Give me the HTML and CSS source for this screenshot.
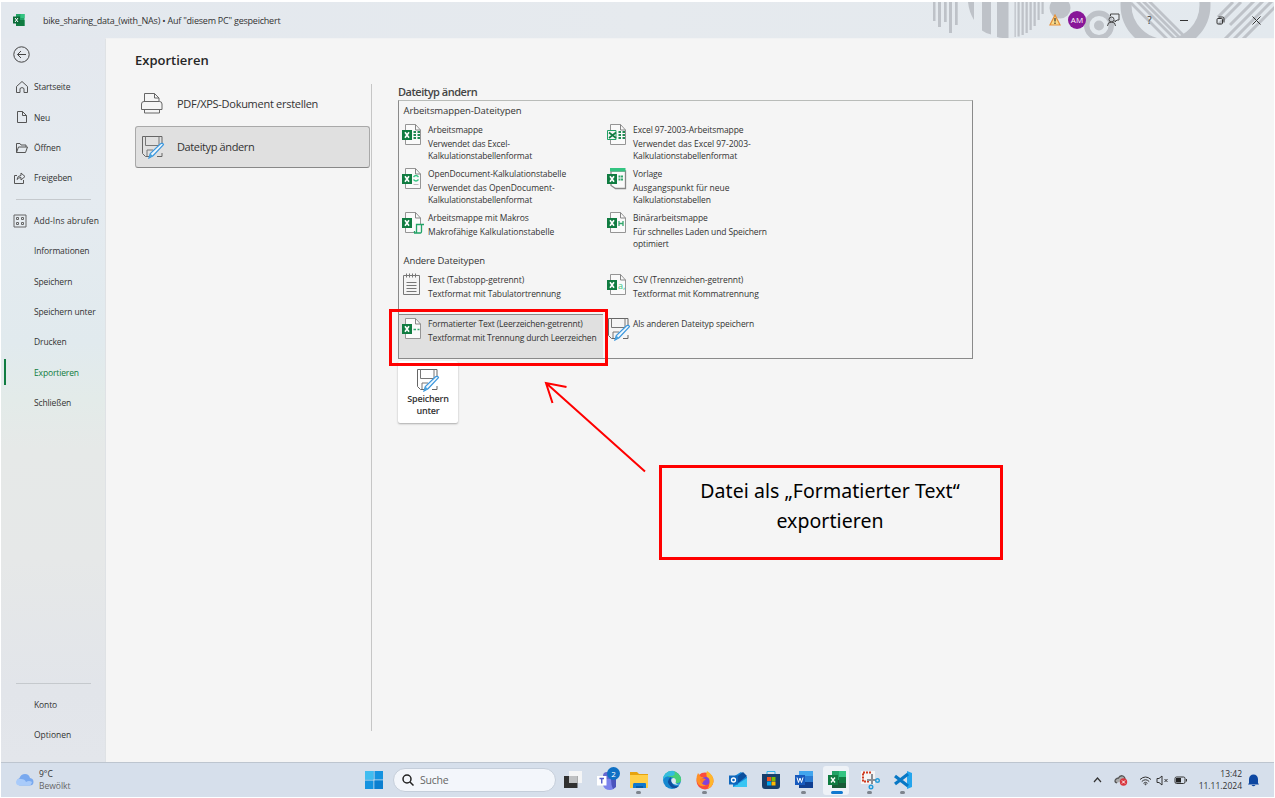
FILE: index.html
```html
<!DOCTYPE html>
<html lang="de">
<head>
<meta charset="utf-8">
<title>Exportieren</title>
<link rel="stylesheet" href="styles.css">
</head>
<body>
<svg class="defs" width="0" height="0">
  <defs>
    <symbol id="page" viewBox="0 0 24 24"><path d="M3.500 1.500h10l5 5.500v14.500h-15z" fill="#fafafa" stroke="#959595"/><path d="M13.500 1.500v5.500h5" fill="none" stroke="#858585"/></symbol>
    <symbol id="xl" viewBox="0 0 24 24"><path d="M0 7h10v10H0z" fill="#107c41"/><path d="M3 9.200l4 5.600M7 9.200l-4 5.600" stroke="#fff" stroke-width="1.600" fill="none"/></symbol>
    <symbol id="disk" viewBox="0 0 24 24"><path d="M1.500 1.500h19.500v8M21 18v3.500h-5M10 21.500H4.500l-3-3v-17" fill="none" stroke="#666"/><path d="M4.500 1.500v9h13.500v-9M6 21v-6h6" fill="none" stroke="#777"/><path d="M8 23l1.300-4.500L19.500 8.700q2.200-1.200 3 1l-10.200 10.800z" fill="#eef7fd" stroke="#3a96dd" stroke-width="1.200"/><path d="M8 23l1.300-4.500 3 2.700z" fill="#4ba3dd"/></symbol>
  </defs>
</svg>
<div class="screen">
  <header class="titlebar">
    <svg class="deco" width="345" height="36" viewBox="929 2 345 36">
      <g fill="#bec2c8">
        <path d="M933 2h2.500v19H933zM938 2h3v25h-3zM944 2h2.700v20H944zM949 2h3v31h-3zM955 2h2.700v23H955zM968 2h6v18Q969 12 968 2zM982 2h9v32.500q-5-1-9-4zM997 2h11.500v36q-6 .500-11.500-1z"/>
        <path d="M1014.500 2h1.300v35h-1.300zM1017.500 2h2.200v34.500h-2.200zM1021.500 2h2.300v33h-2.300zM1025.500 2h2.300v31h-2.300zM1029.500 2h2.300v28h-2.300zM1033.500 2h2.300v24h-2.300zM1037.500 2h2.200v18h-2.200zM1041.500 2h2.200v12h-2.200z"/>
        <circle cx="1060" cy="8" r="10.500"/><circle cx="1099" cy="25.500" r="5"/>
      </g>
      <g fill="none" stroke="#bec2c8">
        <circle cx="1099" cy="25.500" r="12.300" stroke-width="5.400"/>
        <circle cx="1165.500" cy="5" r="39.500" stroke-width="11"/>
        <path d="M1131 3l37 37M1132-4l44 44M1138-4l44 44M1144-4l44 44" stroke-width="2.800"/>
        <path d="M1218 17l15-15M1219 24l22-22M1230 25l25-25M1218 46l48-48M1227 46l48-48M1236 46l48-48" stroke-width="3"/>
      </g>
    </svg>
    <svg class="app-logo" width="12" height="12" viewBox="0 0 12 12"><path d="M3 0h8.500v12H3z" fill="#21a366"/><path d="M3 6h8.500v6H3z" fill="#107c41"/><path d="M7.500 0h4v4h-4z" fill="#33c481"/><path d="M0 2.500h7v7H0z" fill="#0b6b38"/><path d="M2 4l3 4M5 4L2 8" stroke="#fff"/></svg>
    <span class="doc-name">bike_sharing_data_(with_NAs) • Auf "diesem PC" gespeichert</span>
    <div class="controls">
      <svg class="warn" width="12" height="12" viewBox="0 0 12 12"><path d="M6 1l5 10H1z" fill="#f9dc8c" stroke="#e5913a" stroke-width="1.200"/><path d="M6 4v3.500M6 8.500V10" stroke="#3c3325" stroke-width="1.200"/></svg>
      <span class="avatar">AM</span>
      <svg class="feedback" width="14" height="14" viewBox="0 0 14 14" fill="none" stroke="#444"><circle cx="5.500" cy="6.500" r="2.500"/><path d="M1.500 13q0-4 4-4t4 4M4.500 3V1H13v6h-2l-2 2V7"/></svg>
      <span class="cell help">?</span>
      <span class="cell"><svg width="9" height="9"><path d="M0 4.500h8" stroke="#333"/></svg></span>
      <span class="cell"><svg width="9" height="9" fill="none" stroke="#333"><rect x="1" y="2.500" width="5.500" height="5.500" rx="1"/><path d="M2.500 1h4q1.500 0 1.500 1.500v4"/></svg></span>
      <span class="cell"><svg width="9" height="9"><path d="M.500.500l8 8M8.500.500l-8 8" stroke="#333"/></svg></span>
    </div>
  </header>

  <div class="backstage">
    <nav class="side">
      <svg class="back" width="17" height="17" viewBox="0 0 17 17" fill="none" stroke="#444"><circle cx="8.500" cy="8.500" r="7.700"/><path d="M13 8.500H4.500M8 5L4.500 8.500 8 12"/></svg>
      <a class="nav"><svg width="14" height="14" viewBox="0 0 14 14" fill="none" stroke="#555"><path d="M1.500 6.500L7 1.500l5.500 5v6H9v-4q-2-2-4 0v4H1.500z"/></svg><span>Startseite</span></a>
      <a class="nav"><svg width="14" height="14" viewBox="0 0 14 14" fill="none" stroke="#555"><path d="M2.500 1.500h5l4 4v7h-9zM7.500 1.500v4h4"/></svg><span>Neu</span></a>
      <a class="nav"><svg width="14" height="14" viewBox="0 0 14 14" fill="none" stroke="#555"><path d="M1.500 11.500v-9H5l1 1.500h5v2M1.500 11.500l2-5.500h9l-2 5.500z"/></svg><span>Öffnen</span></a>
      <a class="nav share"><svg width="14" height="14" viewBox="0 0 14 14" fill="none" stroke="#555"><path d="M4 4.500H1.500v8h9V9M4 8.500q.500-4 4-4V2L12 5.500 8 9V6.500q-2.500 0-4 2z"/></svg><span>Freigeben</span></a>
      <hr>
      <a class="nav addin"><svg width="14" height="14" viewBox="0 0 14 14" fill="none" stroke="#666"><path d="M1 1h12v12H1zM3.500 3.500h2v2h-2zM8.500 3.500h2v2h-2zM3.500 8.500h2v2h-2zM8.500 8.500h2v2h-2z"/></svg><span>Add-Ins abrufen</span></a>
      <a class="nav plain">Informationen</a>
      <a class="nav plain">Speichern</a>
      <a class="nav plain">Speichern unter</a>
      <a class="nav plain">Drucken</a>
      <a class="nav plain current">Exportieren</a>
      <a class="nav plain">Schließen</a>
      <div class="spacer"></div>
      <hr>
      <a class="nav plain">Konto</a>
      <a class="nav plain last">Optionen</a>
    </nav>

    <main class="export">
      <section class="kinds">
        <h1>Exportieren</h1>
        <div class="kind"><svg width="24" height="24" viewBox="0 0 24 24" fill="none" stroke="#666"><path d="M4.500 10.500v-8h10l4.500 4.500v3.500M14.500 2.500v4.500h4.500M1.500 18.500V13q0-2.500 2.500-2.500h15.500q2.500 0 2.500 2.500v5.500zM4.500 18.500v3.500h15v-3.500"/></svg><span class="k1">PDF/XPS-Dokument erstellen</span></div>
        <div class="kind chosen"><svg width="24" height="24"><use href="#disk"/></svg><span class="k2">Dateityp ändern</span></div>
      </section>
      <section class="types">
        <h2>Dateityp ändern</h2>
        <div class="typebox">
          <h3>Arbeitsmappen-Dateitypen</h3>
          <div class="grid">
            <div class="type"><svg viewBox="0 0 24 24"><use href="#page"/><use href="#xl"/><path d="M11.500 9h2.500M15.500 9H18M11.500 12h2.500M15.500 12H18M11.500 15h2.500M15.500 15H18" stroke="#218a52" stroke-width="1.800"/></svg><p><b>Arbeitsmappe</b>Verwendet das Excel-<br>Kalkulationstabellenformat</p></div>
            <div class="type"><svg viewBox="0 0 24 24"><use href="#page"/><path d="M.500 7.500H9v9H.500z" fill="#f5f5f5" stroke="#21a366"/><path d="M2 9.500l7 5.500M9 9.500L2 15" stroke="#107c41" stroke-width="1.600"/><path d="M11.500 9h2.500M15.500 9H18M11.500 12h2.500M15.500 12H18M11.500 15h2.500M15.500 15H18" stroke="#218a52" stroke-width="1.800"/></svg><p><b>Excel 97-2003-Arbeitsmappe</b><span class="wide">Verwendet das Excel 97-2003-</span><br>Kalkulationstabellenformat</p></div>
            <div class="type"><svg viewBox="0 0 24 24"><use href="#page"/><use href="#xl"/><path d="M11.500 10q2.500-3 5 0M16.500 12.500q-2.500 3-5 0" fill="none" stroke="#33c481" stroke-width="1.300"/><path d="M11.500 17.500h5" stroke="#bbb"/></svg><p><b>OpenDocument-Kalkulationstabelle</b><span class="wide">Verwendet das OpenDocument-</span><br>Kalkulationstabellenformat</p></div>
            <div class="type"><svg viewBox="0 0 24 24"><path d="M4 4h14.500v17.500h-10l-4.500-3z" fill="#fafafa" stroke="#888" stroke-width="1.300"/><path d="M3 1h15.500v3.500H3z" fill="#33c481"/><use href="#xl"/><path d="M11.500 9.500H16M11.500 12.500H16" stroke="#33a66c" stroke-width="2" stroke-dasharray="2 .5"/></svg><p><b>Vorlage</b><span class="wide">Ausgangspunkt für neue</span><br>Kalkulationstabellen</p></div>
            <div class="type"><svg viewBox="0 0 24 24"><use href="#page"/><path d="M14 13h8v10h-9z" fill="#f5f5f5"/><use href="#xl"/><path d="M12 22h6.500q1 0 1-1.500V13.500H22M14.500 22v-8.500h5M12.500 22v-2" fill="none" stroke="#21a366" stroke-width="1.300"/></svg><p><b>Arbeitsmappe mit Makros</b><span class="wide">Makrofähige Kalkulationstabelle</span></p></div>
            <div class="type"><svg viewBox="0 0 24 24"><use href="#page"/><use href="#xl"/><path d="M12 10v5M14 12.500h-2M16 10v5M16 12.500H14" stroke="#33a66c" stroke-width="1.300"/></svg><p><b>Binärarbeitsmappe</b>Für schnelles Laden und Speichern<br>optimiert</p></div>
          </div>
          <h3 class="second">Andere Dateitypen</h3>
          <div class="grid">
            <div class="type"><svg viewBox="0 0 24 24"><path d="M1.500 2.500h16v19h-16zM4.500.500v4M7.500.500v4M10.500.500v4M13.500.500v4M4.500 9.500h10M4.500 12.500h10M4.500 15.500h10M4.500 18.500h10" fill="none" stroke="#777"/></svg><p><b>Text (Tabstopp-getrennt)</b>Textformat mit Tabulatortrennung</p></div>
            <div class="type"><svg viewBox="0 0 24 24"><use href="#page"/><use href="#xl"/><text x="11" y="16" font-size="9" fill="#33c481">a,</text></svg><p><b>CSV (Trennzeichen-getrennt)</b>Textformat mit Kommatrennung</p></div>
            <div class="type picked"><svg viewBox="0 0 24 24"><use href="#page"/><use href="#xl"/><path d="M11.500 12.500h2.500M15.500 12.500h2" stroke="#33a66c" stroke-width="1.300"/></svg><p><b>Formatierter Text (Leerzeichen-getrennt)</b>Textformat mit Trennung durch Leerzeichen</p></div>
            <div class="type"><svg class="disk" viewBox="0 0 24 24"><use href="#disk"/></svg><p><b>Als anderen Dateityp speichern</b></p></div>
          </div>
        </div>
        <button class="save"><svg width="24" height="24"><use href="#disk"/></svg>Speichern<br>unter</button>
      </section>
    </main>
  </div>

  <footer class="taskbar">
    <div class="weather">
      <svg width="19" height="14" viewBox="0 0 19 14"><path d="M4.500 12.500a4 4 0 0 1 0-7.500Q6 1 10 1q4 0 5 4 3.500.500 3.500 4 0 3.500-4 3.500z" fill="#79a9ef"/><path d="M1 9q1-4 5-3 4 0 5 3 3-2 6 0-1 3.500-3 3.500H4Q1 12 1 9z" fill="#a9cbfa"/></svg>
      <p>9°C<br><span>Bewölkt</span></p>
    </div>
    <svg class="start" width="18" height="18"><path d="M0 0h8.500v8.500H0zM9.500 0H18v8.500H9.500zM0 9.500h8.500V18H0zM9.500 9.500H18V18H9.500z" fill="#1593e0"/><path d="M0 0h8.500v8.500H0z" fill="#41bdf0"/><path d="M9.500 9.500H18V18H9.500z" fill="#0c7fd0"/></svg>
    <div class="search"><svg width="12" height="12" fill="none" stroke="#222" stroke-width="1.500"><circle cx="5" cy="5" r="4"/><path d="M8 8l3.500 3.500"/></svg>Suche</div>
    <div class="apps">
      <div class="app"><svg viewBox="0 0 20 20"><path d="M6 1h13v12H6z" fill="#f4f5f6"/><path d="M1 6h13.500v12H1z" fill="#303030"/><path d="M6 6h8.500v7H6z" fill="#bfc1c3"/></svg></div>
      <div class="app"><svg class="teams" viewBox="0 0 26 26"><circle cx="13" cy="9" r="4" fill="#6468d0"/><path d="M9 12h13v7q-2 4-6 4-6 0-7-5z" fill="#7b83eb"/><path d="M17 12h5v8l-3 2q-2-4-2-10z" fill="#4b53bc"/><path d="M3 9h9.500v9.500H3z" fill="#fff"/><path d="M5.500 11.500h4.500M7.750 11.500v5" stroke="#5059c9" stroke-width="1.400"/></svg><span class="badge">2</span></div>
      <div class="app run"><svg viewBox="0 0 20 20"><path d="M1 2h7l2 2h9v14H1z" fill="#e6a30f"/><path d="M1 5h18v13H1z" fill="#ffcf48"/><path d="M5 13h11q1 0 1 1v4H4v-3q0-2 1-2z" fill="#0f78cf"/><path d="M7 16h7v2H7z" fill="#075ca8"/></svg></div>
      <div class="app"><svg viewBox="0 0 20 20"><circle cx="10" cy="10" r="9" fill="#1688d0"/><path d="M3 4q5-5 11-2 6 4 5 9-2 3-6 2 1-5-4-6-4 0-6-3z" fill="#47cf78"/><path d="M3 4q4-4 9-3 3 5-4 5-5 0-7 4 0-4 2-6z" fill="#35bddd"/><path d="M9 7q-6 4 0 10 4 3 8-1-5 1-7-3-2-3-1-6z" fill="#104e9d"/><path d="M9.500 9q2-2 4 0 1 2 0 4 2 2 5 0-3 3-7 1-3-2-2-5z" fill="#dce7ef"/></svg></div>
      <div class="app run"><svg viewBox="0 0 20 20"><circle cx="10" cy="11" r="8.500" fill="#fb4b3c"/><path d="M12 1q7 4 6.500 11-1 5-6 7 4-7 0-11-2-3-.500-7z" fill="#ffb62b"/><path d="M3 3l3 4h5v8q-4 3-8-1-3-5 0-11z" fill="#ff9026"/><circle cx="10.500" cy="11" r="4" fill="#8042db"/><path d="M5 9q4-2 6 1-3 0-3 3-3-1-3-4z" fill="#ff7b24"/></svg></div>
      <div class="app"><svg viewBox="0 0 20 20"><path d="M5 7l8-5 6 5v10H5z" fill="#1688d8"/><path d="M7 8l8-6 4 4-9 7z" fill="#0b4f9d"/><path d="M5 17l14-9v9z" fill="#39c5f3"/><path d="M1 5.500h9v9H1z" fill="#0f67bd"/><circle cx="5.500" cy="10" r="2" fill="none" stroke="#fff" stroke-width="1.300"/></svg></div>
      <div class="app"><svg viewBox="0 0 20 20"><path d="M6 4V1.500h8V4" fill="none" stroke="#35b4eb"/><path d="M1 4h18v12q0 3-3 3H4q-3 0-3-3z" fill="#173f6c"/><path d="M6 7h4v4H6z" fill="#f25022"/><path d="M10.500 7h4v4h-4z" fill="#7fba00"/><path d="M6 11.500h4v4H6z" fill="#00a4ef"/><path d="M10.500 11.500h4v4h-4z" fill="#ffb900"/></svg></div>
      <div class="app run"><svg viewBox="0 0 20 20"><path d="M5 1h14v5H5z" fill="#41a5ee"/><path d="M5 6h14v6H5z" fill="#2b7cd3"/><path d="M5 12h14v6H5z" fill="#103f91"/><path d="M1 5h10v10H1z" fill="#185abd"/><path d="M3 7.500L4.500 12.500 6 8l1.500 4.500L9 7.500" fill="none" stroke="#fff"/></svg></div>
      <div class="app active"><svg viewBox="0 0 20 20"><path d="M5 1h14v17H5z" fill="#21a366"/><path d="M12 1h7v6h-7z" fill="#33c481"/><path d="M5 10h14v8H5z" fill="#185c37"/><path d="M12 7h7v6h-7z" fill="#107c41"/><path d="M1 5h10v10H1z" fill="#107c41"/><path d="M4 7.500l4 5M8 7.500l-4 5" stroke="#fff" stroke-width="1.300"/></svg></div>
      <div class="app run"><svg viewBox="0 0 20 20"><path d="M1 1h14v13H1z" fill="#f5f5f5"/><path d="M3 2.500h9M3 3.500v8h6" fill="none" stroke="#d13b20" stroke-width="2" stroke-dasharray="2 1"/><path d="M12 4v10M7 10h9" fill="none" stroke="#8a8e94" stroke-width="2"/><circle cx="17.500" cy="10.500" r="1.800" fill="none" stroke="#249bd8" stroke-width="1.400"/><circle cx="11" cy="17" r="1.800" fill="none" stroke="#249bd8" stroke-width="1.400"/></svg></div>
      <div class="app run"><svg viewBox="0 0 20 20"><path d="M14 1l5 2v14l-5 2z" fill="#24a5ed"/><path d="M2 6l13 10M2 14L15 4" stroke="#0878c5" stroke-width="3.200" fill="none"/></svg></div>
    </div>
    <div class="tray">
      <svg width="9" height="6" fill="none" stroke="#333" stroke-width="1.200"><path d="M1 5l3.500-4L8 5"/></svg>
      <svg class="cloud" width="14" height="12" viewBox="0 0 14 12"><path d="M3 9Q0 8 1.500 5.500 3 4 4.500 4 6 1 9 2q2 1 2 3" fill="#aaa" stroke="#555" stroke-width="1.300"/><circle cx="9.500" cy="8" r="3.700" fill="#d9363e"/><path d="M8 6.500l3 3M11 6.500l-3 3" stroke="#fff"/></svg>
      <svg class="wifi" width="13" height="11" fill="none" stroke="#333"><path d="M1 4.500q5.500-5 11 0M2.800 6.500q3.700-3.500 7.400 0M4.500 8.300q2-2 4 0"/><circle cx="6.500" cy="9.300" r=".5"/></svg>
      <svg class="sound" width="13" height="11" fill="none" stroke="#333"><path d="M1 3.500h2l3-2.500v9l-3-2.500H1zM8.500 4l3 3M11.500 4l-3 3"/></svg>
      <svg class="battery" width="14" height="9" fill="none" stroke="#333"><rect x="1" y="1" width="10" height="6.500" rx="1.500"/><path d="M12.500 3v2.500"/><path d="M2 2h5v4.500H2z" fill="#222" stroke="none"/></svg>
      <p class="clock"><span>13:42</span><br>11.11.2024</p>
      <svg class="bell" width="11" height="13"><path d="M1 9V5Q1.500.500 5.500.500T10 5v4l1 1.500H0zM3.500 11h4q-2 2.500-4 0z" fill="#0d47a1"/></svg>
    </div>
  </footer>

  <div class="marker"></div>
  <svg class="arrow" width="104" height="94" viewBox="0 0 104 94" fill="none" stroke="#f00" stroke-width="2"><path d="M102 91.500L3 3M23.500 7L3 3l6.500 20"/></svg>
  <div class="callout">Datei als „Formatierter Text“<br><span>exportieren</span></div>
</div>
</body>
</html>
```
FILE: styles.css
```css
* { box-sizing: border-box; }
body { margin: 0; background: #fff; font-family: "Open Sans", "Noto Sans", sans-serif; color: #333; }
h1, h2, h3, p { margin: 0; }
.defs { position: absolute; }
svg { display: block; flex: none; }
.screen { position: relative; width: 1275px; height: 798px; padding: 2px 1px 1px; display: flex; flex-direction: column; overflow: hidden; }

.titlebar { position: relative; height: 36px; flex: none; display: flex; align-items: center; padding-left: 12px; background: linear-gradient(90deg, #e3e8ee, #e6eaee 50%, #e3e9ee); }
.deco { position: absolute; right: 0; top: 0; }
.doc-name { margin-left: 18px; font-size: 9px; letter-spacing: -0.22px; white-space: nowrap; }
.controls { position: relative; margin-left: auto; display: flex; align-items: center; }
.avatar { width: 18px; height: 18px; margin: 0 28px 0 7px; border-radius: 50%; background: #881798; color: #fff; font-size: 8px; line-height: 18px; text-align: center; }
.controls .feedback { margin: 0 11px 0 -8px; }
.cell { width: 36px; display: flex; justify-content: center; font-size: 10px; }
.cell.help { width: 35px; padding-left: 2px; }

.backstage { flex: 1; display: flex; min-height: 0; }
.side { width: 104px; display: flex; flex-direction: column; background: linear-gradient(#e4e8ee, #e5ebf0 22%, #e1eaee 42%, #e3ebe9 50%, #e6e9e8 57%, #e6e8e8 72%, #e2e5ea 90%, #e3e6eb); }
.back { margin: 8px 0 8.8px 12px; }
.nav { height: 30.3px; flex: none; padding-left: 14px; display: flex; align-items: center; gap: 5px; font-size: 8.5px; letter-spacing: -0.13px; white-space: nowrap; }
.nav.share, .nav.addin { padding-left: 12px; gap: 7px; }
.nav.addin { letter-spacing: 0.08px; }
.side hr { width: 75px; height: 1px; margin: 6px 0 5.5px 15px; border: 0; background: #c5c9cd; flex: none; }
.plain { padding-left: 33px; }
.current { position: relative; color: #107c41; }
.current::before { content: ""; position: absolute; left: 3px; top: 2px; width: 2px; height: 26px; background: #107c41; }
.spacer { flex: 1; }
.last { margin-bottom: 12px; letter-spacing: 0; }

.export { flex: 1; display: flex; background: #f5f5f5; border-left: 1px solid #dfe2e5; border-top: 1px solid #f1f2f3; }
.kinds { position: relative; width: 266px; padding: 10px 2px 0 29px; }
.kinds::after { content: ""; position: absolute; right: 0; top: 45px; width: 1px; height: 647px; background: #c6c6c6; }
h1 { height: 22px; font-size: 13px; line-height: 22px; letter-spacing: 0; font-weight: 600; color: #262626; }
.kind { height: 42px; display: flex; align-items: center; gap: 13px; padding-left: 5px; font-size: 11px; white-space: nowrap; }
.kind.chosen span { padding-bottom: 1px; }
h1 + .kind { margin: 11px 0 2px; }
.chosen { gap: 12px; border: 1px solid #a9a9a9; border-bottom-color: #888; border-radius: 3px; background: #e0e0e0; }
.k1 { letter-spacing: -0.28px; }
.k2 { letter-spacing: -0.38px; }

.types { padding: 44px 0 0 26px; }
h2 { font-size: 11px; line-height: 17px; letter-spacing: -0.48px; font-weight: 600; color: #444; }
.typebox { width: 575px; height: 259px; border: 1px solid #8a8a8a; border-top-color: #b9bcb9; }
h3 { height: 19px; padding-left: 4.5px; font-size: 9.5px; line-height: 19px; letter-spacing: -0.07px; font-weight: 400; }
h3.second { height: 18px; line-height: 18px; letter-spacing: -0.1px; }
.grid { display: grid; grid-template-columns: 205px 205px; grid-auto-rows: 44px; }
.type { display: flex; padding: 3px 0 0 3px; }
.type svg { width: 24px; height: 24px; }
.type p { margin-left: 2px; font-size: 8.5px; line-height: 12px; letter-spacing: -0.12px; white-space: nowrap; }
.type b { display: block; height: 15px; line-height: 13px; letter-spacing: -0.09px; font-weight: 400; }
.wide { letter-spacing: -0.02px; }
.picked { background: #e0e0e0; border: 1px solid #8a8a8a; border-width: 1px 0 0; padding-top: 2px; margin-right: 1px; }
.picked p, .picked b { letter-spacing: -0.16px; }
.save { width: 60px; height: 62px; margin-top: 2px; padding: 0; display: block; border: 0; border-radius: 2px; background: #fff; box-shadow: 0 1px 2px #aaa; font: 600 9px/12px "Open Sans", sans-serif; letter-spacing: -0.2px; color: #333; }
.save svg { margin: 0 auto 1px 18px; }

.taskbar { height: 35px; flex: none; display: flex; align-items: center; border-top: 1px solid #bdc5cf; background: #d6dfeb; }
.weather { width: 364px; padding-left: 14px; display: flex; align-items: center; gap: 5px; font-size: 8.5px; line-height: 12px; color: #333; }
.weather p { padding-bottom: 1px; }
.weather span { color: #666; }
.search { width: 163px; height: 24px; margin: 0 0 0 10px; padding-left: 8px; display: flex; align-items: center; gap: 6px; border: 1px solid #c5ceda; border-radius: 12px; background: #f3f6fb; font-size: 10.5px; letter-spacing: -0.25px; color: #666; }
.apps { display: flex; }
.app { position: relative; width: 33px; height: 34px; display: flex; align-items: center; justify-content: center; }
.app svg { position: relative; width: 20px; height: 20px; }
.app svg.teams { width: 26px; height: 26px; left: 1px; }
.badge { position: absolute; right: 2px; top: 4px; width: 13px; height: 13px; border-radius: 50%; background: #0f70c4; color: #fff; font-size: 8px; line-height: 13px; text-align: center; }
.run::after, .active::after { content: ""; position: absolute; left: 14px; bottom: 3px; width: 5px; height: 3px; border-radius: 1.5px; background: #7d848d; }
.active::before { content: ""; position: absolute; left: 3px; top: 3px; width: 26px; height: 29px; border-radius: 3px; background: #eef2f7; }
.active::after { left: 11px; width: 12px; background: #0f78cf; }
.tray { margin-left: auto; padding-right: 15px; display: flex; align-items: center; }
.cloud { margin: 0 11px 0 12px; }
.wifi { margin-right: 4px; }
.sound { margin-right: 5px; }
.battery { margin-right: 1px; }
.clock { margin: 0 6px 0 10px; padding-bottom: 1px; font-size: 8.5px; line-height: 12px; text-align: right; }

.marker { position: absolute; left: 389px; top: 309px; width: 219px; height: 57px; border: 3px solid #f00; }
.arrow { position: absolute; left: 543px; top: 380px; }
.callout { position: absolute; left: 659px; top: 465px; width: 344px; height: 95px; padding: 8px 2px 0 0; border: 3px solid #f00; font: 19.5px/30px "Noto Sans", sans-serif; letter-spacing: 0.06px; text-align: center; color: #000; }
```
